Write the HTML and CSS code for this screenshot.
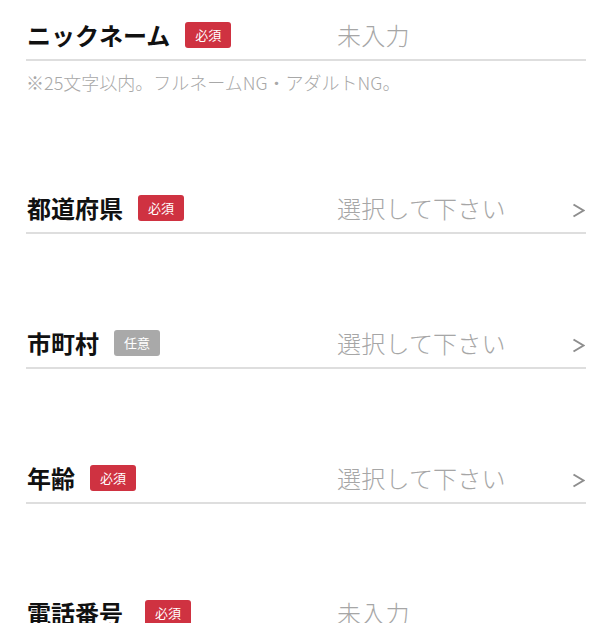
FILE: index.html
```html
<!DOCTYPE html>
<html lang="ja">
<head>
<meta charset="UTF-8">
<meta name="viewport" content="width=device-width, initial-scale=1.0">
<title>プロフィール入力</title>
<link rel="stylesheet" href="styles.css">
</head>
<body>
    <form class="profileForm">
        <div class="field">
            <div class="fieldHead">
                <span class="fieldLabel">ニックネーム</span>
                <span class="badge">必須</span>
            </div>
            <span class="fieldValue">未入力</span>
        </div>
        <p class="note">※25文字以内。フルネームNG・アダルトNG。</p>

        <div class="field">
            <div class="fieldHead">
                <span class="fieldLabel">都道府県</span>
                <span class="badge">必須</span>
            </div>
            <span class="fieldValue">選択して下さい</span>
            <svg class="chevron" width="13" height="15" viewBox="0 0 13 15"><polyline points="1.5,1.5 11.5,7.5 1.5,13.5" fill="none" stroke="#8e8e8e" stroke-width="2"/></svg>
        </div>

        <div class="field">
            <div class="fieldHead">
                <span class="fieldLabel">市町村</span>
                <span class="badge optional">任意</span>
            </div>
            <span class="fieldValue">選択して下さい</span>
            <svg class="chevron" width="13" height="15" viewBox="0 0 13 15"><polyline points="1.5,1.5 11.5,7.5 1.5,13.5" fill="none" stroke="#8e8e8e" stroke-width="2"/></svg>
        </div>

        <div class="field">
            <div class="fieldHead">
                <span class="fieldLabel">年齢</span>
                <span class="badge">必須</span>
            </div>
            <span class="fieldValue">選択して下さい</span>
            <svg class="chevron" width="13" height="15" viewBox="0 0 13 15"><polyline points="1.5,1.5 11.5,7.5 1.5,13.5" fill="none" stroke="#8e8e8e" stroke-width="2"/></svg>
        </div>

        <div class="field phone">
            <div class="fieldHead">
                <span class="fieldLabel">電話番号</span>
                <span class="badge">必須</span>
            </div>
            <span class="fieldValue">未入力</span>
        </div>
    </form>
</body>
</html>
```

FILE: styles.css
```css
body {
    margin: 0;
    background-color: #fff;
    font-family: "Noto Sans CJK JP", "Noto Sans", sans-serif;
    color: #111;
}

.profileForm {
    display: flex;
    flex-direction: column;
    padding: 0 14px 0 26px;
}

.field {
    display: grid;
    grid-template-columns: 311px 1fr auto;
    align-items: center;
    padding: 18px 1px 7px 0;
    border-bottom: 2px solid #dedede;
    margin-top: 74px;
}

.field:first-child {
    margin-top: 0;
}

.note + .field {
    margin-top: 78px;
}

.fieldHead {
    display: flex;
    align-items: center;
    gap: 15px;
    padding-left: 1px;
}

.phone .fieldHead {
    gap: 22px;
}

.fieldLabel {
    font-size: 24px;
    line-height: 34px;
    font-weight: bold;
}

.badge {
    display: inline-block;
    height: 26px;
    line-height: 26px;
    padding: 0 10px;
    font-size: 13px;
    color: #fff;
    background-color: #cf3241;
    border-radius: 3px;
}

.badge.optional {
    background-color: #a9a9a9;
}

.fieldValue {
    font-size: 24px;
    line-height: 34px;
    font-weight: 300;
    color: #a6a6a6;
    letter-spacing: 0.2px;
}

.chevron {
    display: block;
    margin-top: 5px;
}

.note {
    margin: 8px 0 0;
    font-size: 18px;
    line-height: 26px;
    font-weight: 300;
    color: #a8a8a8;
}
```
